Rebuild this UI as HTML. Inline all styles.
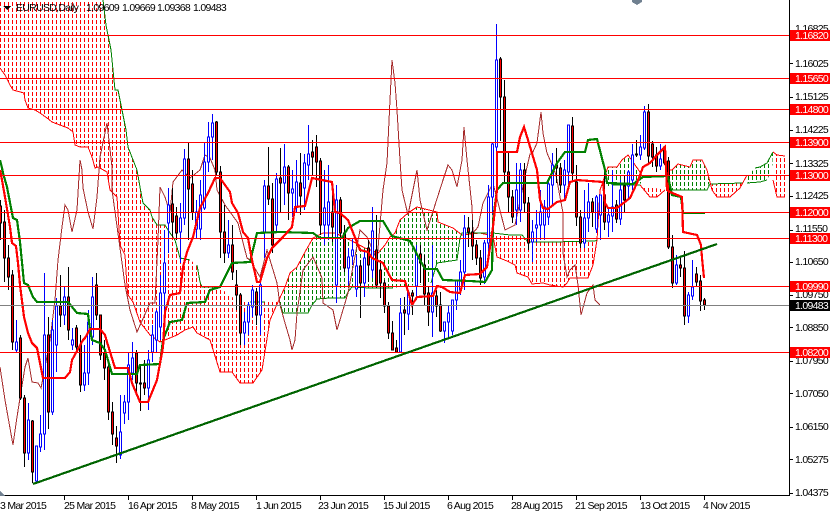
<!DOCTYPE html>
<html><head><meta charset="utf-8"><style>
html,body{margin:0;padding:0;background:#fff;width:830px;height:512px;overflow:hidden}
svg{display:block}
text{font-family:"Liberation Sans",sans-serif;font-size:10.5px;letter-spacing:-.7px;fill:#000}
.l{fill:#fff}
</style></head><body>
<svg width="830" height="512" viewBox="0 0 830 512" xmlns="http://www.w3.org/2000/svg">
<defs>
<pattern id="pr" width="4" height="6" patternUnits="userSpaceOnUse"><rect y="2" width="1" height="4" fill="#f00"/></pattern>
<pattern id="pg" width="4" height="6" patternUnits="userSpaceOnUse"><rect y="2" width="1" height="4" fill="#008000"/></pattern>
</defs>
<rect width="830" height="512" fill="#fff"/>
<g shape-rendering="crispEdges">
<g stroke="none">
<polygon fill="url(#pr)" points="0,0 103,0 106,25 108,35 111,50 113,70 115,90 118,90 123,115 126,130 128,147 135,165 137,170 140,187 143,203 150,210 152,217 157,225 165,225 168,230 175,240 180,258 190,260 197,265 200,282 202,287 220,287 228,295 238,300 250,302 265,302 278,302 270,320 266,345 262,370 253,383 240,383 232,372 220,372 210,340 197,333 193,327 185,330 177,335 165,340 160,342 150,335 140,322 133,302 128,295 127,287 125,255 120,245 117,197 110,190 107,172 98,167 95,168 92,157 88,147 80,147 75,145 73,132 68,128 60,125 52,122 47,118 40,113 35,110 28,108 25,100 24,93 13,90 10,85 5,75 0,68"/>
<polygon fill="url(#pg)" points="280,303 285,287 290,273 297,267 305,252 313,238 323,233 335,233 350,240 365,248 378,253 385,245 390,237 395,233 400,220 408,213 417,207 437,212 438,222 453,228 462,235 460,238 457,260 437,263 431,283 393,288 370,288 352,287 348,292 345,298 330,298 317,299 312,305 308,313 283,313"/>
<polygon fill="url(#pr)" points="490,240 493,233 510,235 522,235 528,242 553,242 595,241 597,240 593,265 588,278 570,278 567,283 563,287 550,285 543,283 532,284 528,277 517,273 515,265 507,261 497,257"/>
<polygon fill="url(#pg)" points="600,190 608,167 617,167 622,160 628,155 633,162 640,172 643,178 640,185 612,185"/>
<polygon fill="url(#pr)" points="640,185 650,197 657,197 665,190"/>
<polygon fill="url(#pg)" points="665,190 672,170 678,164 690,167 693,160 702,160 707,170 710,180 707,190"/>
<polygon fill="url(#pr)" points="710,184 743,183 747,175 740,188 730,197 717,197 712,190"/>
<polygon fill="url(#pg)" points="747,176 755,168 760,167 767,163 773,152 772,170 767,180 760,182 747,183"/>
<polygon fill="url(#pr)" points="774,154 777,155 785,156 785,197 777,197 773,180"/>
</g>
<g fill="none" stroke-width="1">
<polyline stroke="#f00" points="0,68 5,75 10,85 13,90 24,93 25,100 28,108 35,110 40,113 47,118 52,122 60,125 68,128 73,132 75,145 80,147 88,147 92,157 95,168 98,167 107,172 110,190 117,197 120,245 125,255 127,287 128,295 133,302 140,322 150,335 160,342 165,340 177,335 185,330 193,327 197,333 210,340 220,372 232,372 240,383 253,383 262,370 266,345 270,320 278,302 285,287 290,273 297,267 305,252 313,238 323,233 335,233 350,240 365,248 378,253 385,245 390,237 395,233 400,220 408,213 417,207 437,212 438,222 453,228 462,235 480,233 493,236 497,257 507,261 515,265 517,273 528,277 532,284 543,283 550,285 563,287 567,283 570,278 588,278 593,265 597,240 600,190 608,167 617,167 622,160 628,155 633,162 640,172 643,178"/>
<polyline stroke="#008000" points="103,0 106,25 108,35 111,50 113,70 115,90 118,90 123,115 126,130 128,147 135,165 137,170 140,187 143,203 150,210 152,217 157,225 165,225 168,230 175,240 180,258 190,260"/>
<polyline stroke="#008000" points="197,265 200,282 202,287 220,287"/>
<polyline stroke="#008000" points="250,302 265,302"/>
<polyline stroke="#008000" points="280,303 283,313 308,313 312,305 317,299 330,298 345,298 348,292 352,287 370,288 393,288"/>
<polyline stroke="#008000" points="431,283 437,263 457,260 460,238 462,233 493,233 510,235 522,235 528,242 553,242 595,241 597,240"/>
<polyline stroke="#f00" points="640,185 650,197 657,197 665,190"/>
<polyline stroke="#008000" points="612,185 640,185"/>
<polyline stroke="#008000" points="670,190 707,190 710,184 743,183"/>
<polyline stroke="#f00" points="665,170 672,170 678,164 690,167 693,160 702,160 707,170 712,190 717,197 730,197 740,188 747,175"/>
<polyline stroke="#008000" points="747,183 760,182 767,180"/>
<polyline stroke="#008000" points="755,168 760,167 767,163 773,152"/>
<polyline stroke="#f00" points="773,152 777,155 785,156"/>
<polyline stroke="#f00" points="773,180 777,197 785,197"/>
<polyline stroke="#a52a2a" points="0,367 5,400 13,445 17,417 20,398 25,367 28,358 32,382 38,383 41,388 43,378 50,340 55,300 58,260 62,227 65,205 68,210 72,232 77,210 80,160 82,170 83,188 88,212 93,229 97,197 100,157 107,123 112,167 112,190 120,248 125,285 130,310 137,332 150,303 155,303 158,240 160,187 165,197 170,213 173,182 182,170 190,178 200,170 205,155 210,158 215,170 217,190 225,205 238,223 247,258 250,260 260,277 267,250 277,283 280,305 285,323 290,340 292,350 295,340 297,313 303,270 313,257 322,278 323,303 333,310 337,330 348,293 360,230 367,237 377,260 383,190 387,163 390,100 392,60 395,83 397,110 400,160 402,190 408,215 413,190 417,170 420,200 427,230 443,180 448,165 452,170 457,187 462,160 464,127 467,160 472,207 473,233 478,227 483,203 493,183 505,230 515,225 527,167 530,154 532,154 537,143 541,112 543,133 547,153 553,167 556,175 560,197 563,213 563,253 567,277 570,270 575,265 578,285 581,315 587,293 593,285 595,300 600,305"/>
</g>
<!-- blue candles -->
<path fill="none" stroke="#00f" d="M16.5 320V352M28.5 403V460M36.5 446V483M40.5 415V452M44.5 273V450M52.5 320V415M56.5 298V372M64.5 287V325M72.5 328V350M84.5 345V391M88.5 310V385M92.5 277V345M120.5 395V459M124.5 395V424M128.5 353V420M132.5 342V380M148.5 350V410M152.5 325V362M156.5 310V352M160.5 275V340M164.5 230V320M168.5 188V253M180.5 203V263M184.5 149V225M196.5 200V238M200.5 180V240M204.5 142V210M208.5 122V172M212.5 114V160M228.5 220V258M244.5 312V345M248.5 302V335M252.5 285V317M260.5 277V335M264.5 180V258M276.5 173V232M284.5 144V205M292.5 170V217M296.5 160V212M304.5 154V210M308.5 125V180M324.5 170V245M328.5 165V240M336.5 185V303M348.5 248V285M352.5 238V265M356.5 255V297M364.5 250V297M372.5 207V278M400.5 298V353M408.5 292V330M416.5 245V300M432.5 245V337M444.5 322V343M448.5 306V338M452.5 300V335M456.5 280V310M460.5 260V295M464.5 215V290M484.5 240V284M488.5 185V255M492.5 143V215M496.5 24V155M516.5 163V225M520.5 163V222M532.5 220V262M536.5 210V242M540.5 190V240M544.5 200V240M548.5 180V225M552.5 153V205M564.5 160V200M568.5 125V190M584.5 190V248M588.5 183V232M596.5 195V233M600.5 195V240M608.5 208V237M612.5 170V232M620.5 180V225M628.5 170V200M632.5 144V190M640.5 135V160M644.5 106V150M660.5 144V170M676.5 255V285M688.5 292V323M692.5 260V300"/>
<path fill="#fff" stroke="#00f" d="M15.5 342h2v8h-2zM27.5 420h2v33h-2zM35.5 446h2v35h-2zM39.5 434h2v13h-2zM43.5 335h2v99h-2zM51.5 330h2v82h-2zM55.5 306h2v39h-2zM63.5 297h2v18h-2zM71.5 340h2v5h-2zM83.5 373h2v12h-2zM87.5 322h2v51h-2zM91.5 297h2v40h-2zM119.5 432h2v23h-2zM123.5 402h2v11h-2zM127.5 365h2v37h-2zM131.5 358h2v15h-2zM147.5 360h2v28h-2zM151.5 335h2v17h-2zM155.5 312h2v28h-2zM159.5 293h2v34h-2zM163.5 263h2v30h-2zM167.5 205h2v18h-2zM179.5 218h2v14h-2zM183.5 159h2v59h-2zM195.5 212h2v17h-2zM199.5 195h2v34h-2zM203.5 162h2v46h-2zM207.5 137h2v25h-2zM211.5 123h2v14h-2zM227.5 245h2v8h-2zM243.5 322h2v11h-2zM247.5 305h2v17h-2zM251.5 290h2v17h-2zM259.5 285h2v30h-2zM263.5 186h2v46h-2zM275.5 179h2v46h-2zM283.5 167h2v16h-2zM291.5 189h2v4h-2zM295.5 182h2v25h-2zM303.5 163h2v25h-2zM307.5 154h2v11h-2zM323.5 208h2v17h-2zM327.5 202h2v23h-2zM335.5 200h2v85h-2zM347.5 257h2v11h-2zM351.5 250h2v6h-2zM355.5 266h2v23h-2zM363.5 258h2v25h-2zM371.5 231h2v39h-2zM399.5 313h2v39h-2zM407.5 293h2v21h-2zM415.5 254h2v32h-2zM431.5 293h2v19h-2zM443.5 322h2v9h-2zM447.5 313h2v9h-2zM451.5 300h2v31h-2zM455.5 280h2v20h-2zM459.5 272h2v18h-2zM463.5 228h2v44h-2zM483.5 243h2v34h-2zM487.5 197h2v46h-2zM491.5 144h2v53h-2zM495.5 60h2v87h-2zM515.5 190h2v20h-2zM519.5 170h2v40h-2zM531.5 232h2v10h-2zM535.5 225h2v3h-2zM539.5 212h2v13h-2zM543.5 207h2v18h-2zM547.5 184h2v33h-2zM551.5 165h2v20h-2zM563.5 170h2v15h-2zM567.5 125h2v47h-2zM583.5 218h2v25h-2zM587.5 202h2v16h-2zM595.5 197h2v32h-2zM599.5 195h2v20h-2zM607.5 215h2v7h-2zM611.5 207h2v9h-2zM619.5 190h2v29h-2zM627.5 172h2v14h-2zM631.5 155h2v25h-2zM639.5 147h2v8h-2zM643.5 112h2v36h-2zM659.5 159h2v7h-2zM675.5 265h2v18h-2zM687.5 295h2v21h-2zM691.5 287h2v9h-2z"/>
<!-- black candles -->
<path fill="none" stroke="#000" d="M.5 200V240M4.5 210V282M8.5 245V290M12.5 270V350M20.5 335V400M24.5 395V467M32.5 420V483M48.5 317V429M60.5 275V327M68.5 267V340M76.5 325V352M80.5 335V392M96.5 273V320M100.5 315V360M104.5 340V380M108.5 362V420M112.5 402V445M116.5 426V463M136.5 350V395M140.5 365V411M144.5 360V395M172.5 188V237M176.5 207V240M188.5 143V240M192.5 170V220M216.5 121V175M220.5 166V258M224.5 205V263M232.5 225V280M236.5 270V310M240.5 293V345M256.5 288V325M268.5 147V205M272.5 183V253M280.5 148V212M288.5 165V220M300.5 153V215M312.5 140V175M316.5 135V187M320.5 158V235M332.5 185V242M340.5 197V240M344.5 225V272M360.5 260V318M368.5 240V282M376.5 215V288M380.5 260V298M384.5 280V313M388.5 302V339M392.5 321V350M396.5 340V353M404.5 297V335M412.5 290V315M420.5 245V283M424.5 255V305M428.5 287V326M436.5 290V317M440.5 292V332M468.5 217V247M472.5 220V260M476.5 240V265M480.5 250V285M500.5 57V141M504.5 80V182M508.5 153V213M512.5 190V223M524.5 163V213M528.5 197V250M556.5 148V183M560.5 163V193M572.5 117V182M576.5 165V226M580.5 210V248M592.5 198V227M604.5 170V230M616.5 200V223M624.5 175V213M636.5 140V157M648.5 104V163M652.5 141V167M656.5 147V172M664.5 147V165M668.5 157V249M672.5 235V288M680.5 256V277M684.5 251V325M696.5 267V287M700.5 275V311M704.5 298V310"/>
<path fill="#f00" stroke="#000" d="M-.5 206h2v17h-2zM3.5 222h2v36h-2zM7.5 258h2v19h-2zM11.5 275h2v67h-2zM19.5 338h2v60h-2zM23.5 398h2v55h-2zM31.5 421h2v51h-2zM47.5 335h2v77h-2zM59.5 306h2v9h-2zM67.5 297h2v33h-2zM75.5 328h2v19h-2zM79.5 345h2v40h-2zM95.5 285h2v30h-2zM99.5 315h2v40h-2zM103.5 353h2v15h-2zM107.5 367h2v45h-2zM111.5 412h2v22h-2zM115.5 438h2v8h-2zM135.5 353h2v30h-2zM139.5 383h2v1h-2zM143.5 383h2v5h-2zM171.5 204h2v18h-2zM175.5 216h2v17h-2zM187.5 159h2v30h-2zM191.5 184h2v28h-2zM215.5 122h2v50h-2zM219.5 172h2v60h-2zM223.5 232h2v21h-2zM231.5 245h2v27h-2zM235.5 285h2v10h-2zM239.5 295h2v38h-2zM255.5 292h2v23h-2zM267.5 186h2v13h-2zM271.5 199h2v46h-2zM279.5 178h2v5h-2zM287.5 167h2v26h-2zM299.5 183h2v13h-2zM311.5 152h2v5h-2zM315.5 147h2v15h-2zM319.5 161h2v64h-2zM331.5 212h2v15h-2zM339.5 200h2v33h-2zM343.5 233h2v35h-2zM359.5 266h2v17h-2zM367.5 248h2v17h-2zM375.5 250h2v35h-2zM379.5 270h2v13h-2zM383.5 283h2v23h-2zM387.5 306h2v27h-2zM391.5 333h2v17h-2zM395.5 348h2v4h-2zM403.5 310h2v3h-2zM411.5 293h2v3h-2zM419.5 254h2v9h-2zM423.5 265h2v29h-2zM427.5 293h2v19h-2zM435.5 296h2v10h-2zM439.5 305h2v26h-2zM467.5 228h2v4h-2zM471.5 232h2v14h-2zM475.5 245h2v13h-2zM479.5 258h2v20h-2zM499.5 59h2v38h-2zM503.5 97h2v75h-2zM507.5 172h2v25h-2zM511.5 197h2v20h-2zM523.5 170h2v33h-2zM527.5 203h2v40h-2zM555.5 165h2v3h-2zM559.5 168h2v17h-2zM571.5 126h2v47h-2zM575.5 182h2v35h-2zM579.5 217h2v26h-2zM591.5 202h2v10h-2zM603.5 195h2v27h-2zM615.5 205h2v14h-2zM623.5 186h2v14h-2zM635.5 154h2v1h-2zM647.5 112h2v44h-2zM651.5 144h2v13h-2zM655.5 155h2v11h-2zM663.5 147h2v16h-2zM667.5 161h2v86h-2zM671.5 247h2v36h-2zM679.5 265h2v3h-2zM683.5 268h2v48h-2zM695.5 274h2v8h-2zM699.5 281h2v20h-2zM703.5 300h2v5h-2z"/>
<!-- kijun + tenkan -->
<g fill="none">
<polyline stroke="#008000" stroke-width="2.2" points="0,160 2,168 3,173 7,187 12,213 13,218 17,220 20,242 24,283 28,285 33,297 37,302 68,302 77,313 88,314 90,330 92,340 100,343 105,350 112,374 137,374 140,365 160,364 163,340 170,322 182,320 187,303 205,302 210,290 220,287 232,263 250,262 257,233 280,232 313,233 320,238 342,238 348,228 360,221 383,221 392,236 410,241 420,260 425,269 437,269 443,280 470,281 485,282 492,270 493,220 497,190 503,183 547,183 557,163 565,152 585,152 588,140 597,139 605,170 607,183 633,184 643,177 668,176 672,195 681,197 683,213 705,213"/>
<polyline stroke="#f00" stroke-width="2.2" points="0,170 2,180 5,197 10,227 12,243 16,246 18,263 20,285 24,317 28,333 32,343 37,348 43,378 65,378 70,372 72,360 83,340 85,338 90,329 100,329 105,335 107,342 115,368 128,368 132,383 140,402 148,402 157,380 163,347 165,312 170,295 180,293 183,267 187,252 193,237 200,208 208,193 215,178 220,178 230,192 232,203 238,213 243,232 248,238 252,260 257,282 260,282 267,258 272,248 280,240 283,237 292,227 295,207 305,206 312,178 332,182 335,212 340,213 348,220 360,250 368,252 372,258 383,263 392,280 405,281 412,305 417,297 433,296 437,286 442,287 450,292 460,293 465,275 480,274 487,267 493,227 497,190 497,152 517,152 520,137 524,127 528,140 537,170 540,200 543,208 548,209 557,202 565,200 570,182 577,180 603,182 605,203 608,208 617,208 630,198 637,183 643,167 650,163 657,155 665,147 667,190 670,192 682,197 683,232 697,235 701,245 702,258 704,278"/>
</g>
<!-- horizontal levels -->
<g stroke="#f00" fill="none">
<path d="M0 35.5H789M0 78.5H789M0 109.5H789M0 142.5H789M0 175.5H789M0 212.5H789M0 238.5H789M0 286.5H789M0 352.5H789"/>
</g>
<path d="M0 305.5H789" stroke="#808080" fill="none"/>
<!-- trendline -->
<line x1="33" y1="484" x2="717" y2="244" stroke="#006400" stroke-width="2.2"/>
<!-- axes -->
<path d="M789.5 0V496M0 495.5H790" stroke="#000" fill="none"/>
<path stroke="#000" fill="none" d="M64.5 496v4M128.5 496v4M192.5 496v4M256.5 496v4M320.5 496v4M384.5 496v4M448.5 496v4M512.5 496v4M576.5 496v4M640.5 496v4M704.5 496v4M789 63.5h4M789 97.5h4M789 130.5h4M789 163.5h4M789 196.5h4M789 230.5h4M789 262.5h4M789 295.5h4M789 327.5h4M789 361.5h4M789 393.5h4M789 427.5h4M789 459.5h4M789 493.5h4"/>
<polygon points="3,6 11,6 7,10" fill="#000"/>
<polygon points="632,0 642,0 642,2 637,5 632,2" fill="#708090"/>
<polygon points="0,491 5,496 0,496" fill="#708090"/>
</g>
<!-- title -->
<text x="16" y="11">EURUSD,Daily</text>
<text x="86" y="11">1.09609</text>
<text x="122" y="11">1.09669</text>
<text x="157" y="11">1.09368</text>
<text x="193" y="11">1.09483</text>
<!-- price scale -->
<g>
<text x="795" y="32">1.16825</text>
<text x="795" y="67">1.16025</text>
<text x="795" y="100">1.15125</text>
<text x="795" y="133">1.14225</text>
<text x="795" y="167">1.13325</text>
<text x="795" y="199">1.12425</text>
<text x="795" y="232">1.11550</text>
<text x="795" y="265">1.10650</text>
<text x="795" y="298">1.09750</text>
<text x="795" y="331">1.08850</text>
<text x="795" y="364">1.07950</text>
<text x="795" y="397">1.07050</text>
<text x="795" y="430">1.06150</text>
<text x="795" y="463">1.05275</text>
<text x="795" y="496">1.04375</text>
</g>
<g fill="#f00" shape-rendering="crispEdges">
<rect x="790" y="30" width="40" height="11"/><rect x="790" y="73" width="40" height="11"/><rect x="790" y="104" width="40" height="11"/><rect x="790" y="137" width="40" height="11"/><rect x="790" y="170" width="40" height="11"/><rect x="790" y="207" width="40" height="11"/><rect x="790" y="233" width="40" height="11"/><rect x="790" y="281" width="40" height="11"/><rect x="790" y="347" width="40" height="11"/>
</g>
<rect x="790" y="300" width="40" height="11" fill="#000" shape-rendering="crispEdges"/>
<g>
<text class="l" x="795" y="39">1.16820</text>
<text class="l" x="795" y="82">1.15650</text>
<text class="l" x="795" y="113">1.14800</text>
<text class="l" x="795" y="146">1.13900</text>
<text class="l" x="795" y="179">1.13000</text>
<text class="l" x="795" y="216">1.12000</text>
<text class="l" x="795" y="242">1.11300</text>
<text class="l" x="795" y="290">1.09990</text>
<text class="l" x="795" y="356">1.08200</text>
<text class="l" x="795" y="309">1.09483</text>
</g>
<!-- time scale -->
<g>
<text x="0" y="509">3 Mar 2015</text>
<text x="64" y="509">25 Mar 2015</text>
<text x="128" y="509">16 Apr 2015</text>
<text x="191" y="509">8 May 2015</text>
<text x="256" y="509">1 Jun 2015</text>
<text x="318" y="509">23 Jun 2015</text>
<text x="383" y="509">15 Jul 2015</text>
<text x="447" y="509">6 Aug 2015</text>
<text x="511" y="509">28 Aug 2015</text>
<text x="575" y="509">21 Sep 2015</text>
<text x="640" y="509">13 Oct 2015</text>
<text x="703" y="509">4 Nov 2015</text>
</g>
</svg>
</body></html>
